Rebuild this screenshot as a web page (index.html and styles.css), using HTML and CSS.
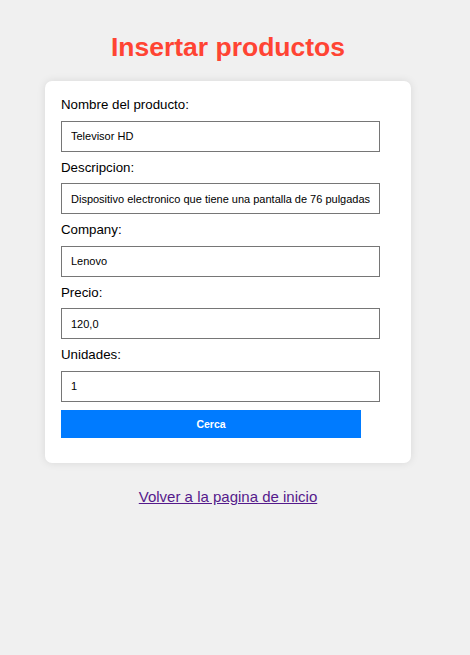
FILE: index.html
```html
<!DOCTYPE html>
<html lang="es">
<head>
<meta charset="utf-8">
<title>Insertar productos</title>
<link rel="stylesheet" href="styles.css">
</head>
<body>
<main class="page">
  <h1 class="title">Insertar productos</h1>
  <form class="card">
    <label class="label" for="nombre">Nombre del producto:</label>
    <input class="field" id="nombre" type="text" value="Televisor HD">
    <label class="label" for="desc">Descripcion:</label>
    <input class="field" id="desc" type="text" value="Dispositivo electronico que tiene una pantalla de 76 pulgadas">
    <label class="label" for="company">Company:</label>
    <input class="field" id="company" type="text" value="Lenovo">
    <label class="label" for="precio">Precio:</label>
    <input class="field" id="precio" type="text" value="120,0">
    <label class="label" for="unidades">Unidades:</label>
    <input class="field" id="unidades" type="text" value="1">
    <button class="submit" type="button">Cerca</button>
  </form>
  <a class="back" href="#">Volver a la pagina de inicio</a>
</main>
</body>
</html>
```
FILE: styles.css
```css
html, body {
  margin: 0;
  padding: 0;
  background: #f0f0f0;
  font-family: "Liberation Sans", Arial, sans-serif;
}

.page {
  width: 456px;
  display: flex;
  flex-direction: column;
  align-items: center;
  padding-top: 32px;
}

.title {
  margin: 0 0 18px;
  font-size: 26.5px;
  line-height: 31px;
  font-weight: bold;
  color: #ff4433;
}

.card {
  box-sizing: border-box;
  width: 366px;
  background: #ffffff;
  border-radius: 7px;
  box-shadow: 0 0 8px rgba(0, 0, 0, 0.1);
  padding: 16px 16px 25px;
  display: flex;
  flex-direction: column;
  align-items: flex-start;
}

.label {
  display: block;
  font-size: 13.3px;
  line-height: 15.5px;
  color: #000;
  margin-bottom: 8px;
}

.field {
  box-sizing: border-box;
  width: 319px;
  height: 31px;
  margin: 0 0 8px;
  padding: 0 9px;
  border: 1px solid #767676;
  border-radius: 0;
  background: #fff;
  font-family: "Liberation Sans", Arial, sans-serif;
  font-size: 11px;
  color: #000;
  outline: none;
}

.submit {
  width: 300px;
  height: 28px;
  border: none;
  background: #007bff;
  color: #fff;
  font-family: "Liberation Sans", Arial, sans-serif;
  font-size: 10.5px;
  font-weight: bold;
  padding: 0;
}

.back {
  margin-top: 25px;
  font-size: 15px;
  color: #551a8b;
  text-decoration: underline;
}
```
